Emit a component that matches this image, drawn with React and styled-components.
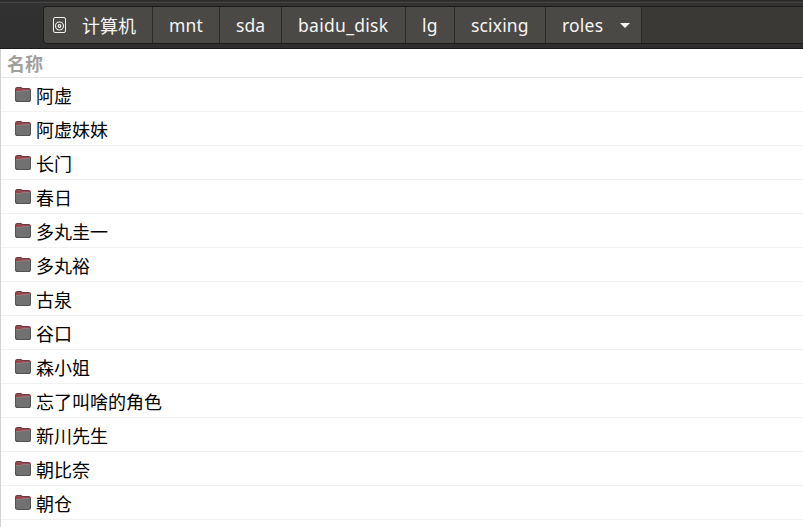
import React from "react";
import styled, { createGlobalStyle } from "styled-components";

const GlobalStyle = createGlobalStyle`
  * { box-sizing: border-box; }
  body {
    margin: 0;
    overflow: hidden;
    background: #fff;
    font-family: "Noto Sans", "Noto Sans CJK SC", sans-serif;
  }
`;

const Window = styled.main`
  display: flex;
  flex-direction: column;
  height: 527px;
  overflow: hidden;
`;

const Toolbar = styled.header`
  flex: none;
  height: 49px;
  padding: 5px 0 4px 43px;
  border-top: 1px solid #2b2a29;
  border-bottom: 1px solid #1c1b1b;
  background: linear-gradient(#333 0 1px, #454443 1px 2px, #333232 2px, #2f2e2e);
`;

const PathBar = styled.nav`
  display: flex;
  height: 38px;
  border: 1px solid #1d1c1b;
  border-right: 0;
  border-radius: 4px 0 0 4px;
  background: #3a3936;
  overflow: hidden;
`;

const Crumb = styled.button`
  display: flex;
  align-items: center;
  flex: none;
  width: ${(p) => p.$width}px;
  height: 36px;
  padding: 0 0 0 ${(p) => p.$inset ?? 16}px;
  border: 0;
  border-right: 1px solid #2b2a28;
  background: #4a4946;
  color: #f6f5f3;
  font: inherit;
  font-size: ${(p) => p.$size ?? 17.5}px;
  line-height: 24px;
  letter-spacing: ${(p) => p.$spacing ?? 0}px;
  white-space: nowrap;
`;

const RootLabel = styled.span`
  padding-top: 2px;
`;

const DiskIcon = styled.svg`
  flex: none;
  width: 14px;
  height: 18px;
  margin-right: 15px;
`;

const Caret = styled.svg`
  flex: none;
  width: 10px;
  height: 5px;
  margin-left: auto;
  margin-right: 11px;
`;

const FileList = styled.section`
  flex: 1;
  border-left: 1px solid #d3d2d1;
  background: #fff;
`;

const ColumnHeader = styled.div`
  display: flex;
  align-items: center;
  height: 29px;
  padding: 0 0 1px 6px;
  border-bottom: 1px solid #e4e4e4;
  color: #a09f9e;
  font-family: "Noto Sans CJK SC", sans-serif;
  font-size: 18px;
  font-weight: 700;
  line-height: 26px;
`;

const Row = styled.div`
  display: flex;
  align-items: center;
  height: 34px;
  padding-left: 14px;
  border-bottom: 1px solid #f1f1f1;
  color: #000;
  font-family: "Noto Sans CJK SC", sans-serif;
  font-size: 18px;
  line-height: 26px;
`;

const RowLabel = styled.span`
  padding-top: 1px;
`;

const FolderSvg = styled.svg`
  flex: none;
  width: 16px;
  height: 15px;
  margin-right: 5px;
`;

function Folder() {
  return (
    <FolderSvg viewBox="0 0 16 15">
      <path d="M0 2.8Q0 0 2.3 0H6L7.6 1H13.5Q16 1 16 3.3V8H0Z" fill="#693d40" />
      <path d="M1 3Q1 1 2.5 1H5.8L7.5 2H13.5Q15 2 15 3.5V5H1Z" fill="#a04450" />
      <path d="M0 4.2H6L7.5 3H16V12.4Q16 15 13.4 15H2.6Q0 15 0 12.4Z" fill="#535252" />
      <path d="M1 4.6H6.2L7.8 3.4H15V12Q15 14 13 14H3Q1 14 1 12Z" fill="#727171" />
      <path d="M1 4.5H6L7.7 3.4H15" fill="none" stroke="#a08482" strokeWidth=".8" />
    </FolderSvg>
  );
}

const crumbs = [
  { label: "mnt", width: 67, spacing: 0.1 },
  { label: "sda", width: 62 },
  { label: "baidu_disk", width: 124, spacing: 0.3 },
  { label: "lg", width: 49, spacing: 0.3 },
  { label: "scixing", width: 91, spacing: 0.15 },
];

const folders = [
  "阿虚", "阿虚妹妹", "长门", "春日", "多丸圭一", "多丸裕", "古泉",
  "谷口", "森小姐", "忘了叫啥的角色", "新川先生", "朝比奈", "朝仓",
];

export default function App() {
  return (
    <Window>
      <GlobalStyle />
      <Toolbar>
        <PathBar>
          <Crumb $width={109} $inset={9} $size={18}>
            <DiskIcon viewBox="0 0 14 18" fill="none" stroke="#f2f1ef">
              <rect x=".5" y="1.5" width="12" height="15" rx="1.5" />
              <circle cx="6.5" cy="10" r="4" strokeWidth="1.1" />
              <circle cx="6.5" cy="10" r="1.3" strokeWidth="1.2" />
            </DiskIcon>
            <RootLabel>计算机</RootLabel>
          </Crumb>
          {crumbs.map((c) => (
            <Crumb key={c.label} $width={c.width} $spacing={c.spacing}>
              <span>{c.label}</span>
            </Crumb>
          ))}
          <Crumb $width={96} $spacing={0.2}>
            <span>roles</span>
            <Caret viewBox="0 0 10 5"><path d="M0 0H10L5 5Z" fill="#f8f8f6" /></Caret>
          </Crumb>
        </PathBar>
      </Toolbar>
      <FileList>
        <ColumnHeader>名称</ColumnHeader>
        {folders.map((name) => (
          <Row key={name}>
            <Folder />
            <RowLabel>{name}</RowLabel>
          </Row>
        ))}
      </FileList>
    </Window>
  );
}
